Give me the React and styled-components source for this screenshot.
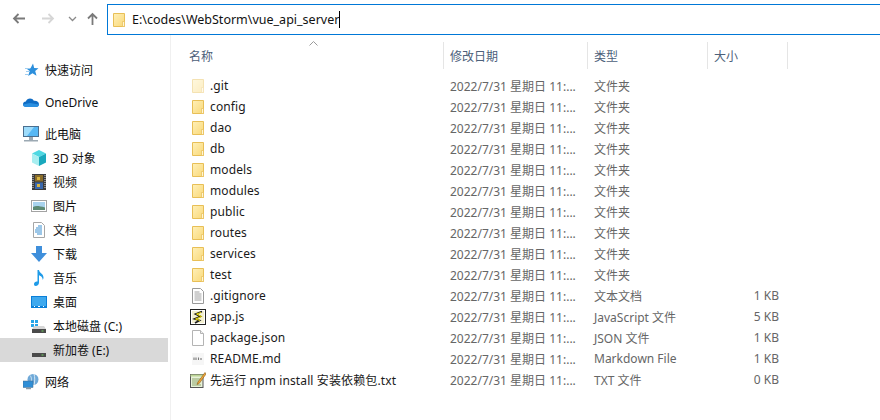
import React from "react";
import styled, { createGlobalStyle } from "styled-components";

const Global = createGlobalStyle`
  html, body { margin: 0; padding: 0; background: #fff; }
  body { font-family: "Noto Sans", "Noto Sans CJK SC", sans-serif; font-size: 12px; color: #1a1a1a; }
`;
const Win = styled.div`width: 880px; height: 420px; overflow: hidden; display: flex; flex-direction: column; background: #fff;`;
const Toolbar = styled.div`height: 35px; display: flex; align-items: flex-start; padding-top: 4px; box-sizing: border-box; flex: none;`;
const NavIcons = styled.div`width: 107px; height: 30px; display: flex; align-items: center; flex: none;`;
const NavBtn = styled.span`display: flex; width: ${p => p.$w}px; margin-left: ${p => p.$ml}px; justify-content: center;`;
const Address = styled.div`flex: 1; height: 31px; box-sizing: border-box; border: 1px solid #0078d7; border-right: 0; display: flex; align-items: center; padding-left: 3px; gap: 5px; font-size: 12.5px; color: #111;`;
const Caret = styled.span`display: inline-block; width: 1px; height: 17px; background: #000; vertical-align: -4px;`;
const Body = styled.div`flex: 1; display: flex; min-height: 0;`;
const Sidebar = styled.nav`width: 171px; flex: none; box-sizing: border-box; border-right: 1px solid #f0f0f0; padding-top: 23px; padding-right: 2px; display: flex; flex-direction: column;`;
const NavRow = styled.div`
  height: 24px; display: flex; align-items: center; gap: ${p => p.$sub ? 6 : 6}px; padding-left: ${p => p.$sub ? 31 : 23}px;
  margin-bottom: ${p => p.$gap || 0}px; background: ${p => p.$active ? "#d9d9d9" : "transparent"}; color: #111; white-space: nowrap;
`;
const IconBox = styled.span`width: 16px; height: 16px; display: flex; flex: none; align-items: center; justify-content: center;`;
const Main = styled.main`flex: 1; display: flex; flex-direction: column; position: relative;`;
const SortArrow = styled.svg`position: absolute; left: 138px; top: 6px;`;
const HeaderRow = styled.div`height: 27px; margin-top: 7px; display: grid; grid-template-columns: 273px 144px 120px 80px; flex: none;`;
const HeaderCell = styled.div`padding-left: ${p => p.$first ? 18 : 6}px; border-right: 1px solid #e5e5e5; display: flex; align-items: center; color: #4c607a;`;
const Rows = styled.div`margin-top: 6px; display: flex; flex-direction: column;`;
const Row = styled.div`height: 21px; display: grid; grid-template-columns: 273px 144px 120px 71px; align-items: center; white-space: nowrap;`;
const NameCell = styled.div`display: flex; align-items: center; gap: 4px; padding-left: 19px; color: #1a1a1a; letter-spacing: .12px;`;
const DataCell = styled.div`padding-left: 6px; color: #666; overflow: hidden;`;
const SizeCell = styled.div`text-align: right; color: #666;`;

const Folder = ({ faded }) => (
  <svg width="16" height="16" viewBox="0 0 16 16" opacity={faded ? 0.45 : 1}>
    <defs><linearGradient id="fg" x1="0" y1="0" x2="1" y2="1"><stop offset="0" stopColor="#fff0b8"/><stop offset="1" stopColor="#f9d878"/></linearGradient></defs>
    <path d="M2.5 1.5h11v13h-11z" fill="url(#fg)" stroke="#e8bf56"/>
    <path d="M11.5 9.5h2v5h-2z" fill="#fff6d4" stroke="#e8bf56" strokeWidth=".7"/>
  </svg>
);
const TextDoc = () => (
  <svg width="16" height="16" viewBox="0 0 16 16">
    <path d="M2.5.5h8l3 3v12h-11z" fill="#fff" stroke="#9a9a9a"/>
    <path d="M4.5 4h5M4.5 6h7M4.5 8h7M4.5 10h7M4.5 12h7" stroke="#a0a0a0"/>
  </svg>
);
const BlankDoc = () => (
  <svg width="16" height="16" viewBox="0 0 16 16">
    <path d="M2.5.5h8l3 3v12h-11z" fill="#fff" stroke="#b4b4b4"/>
    <path d="M10.5.5v3h3" fill="#f0f0f0" stroke="#b4b4b4"/>
  </svg>
);
const JsDoc = () => (
  <svg width="16" height="16" viewBox="0 0 16 16">
    <rect x=".5" y=".5" width="15" height="15" fill="#fff" stroke="#222"/>
    <rect x="2" y="2" width="12" height="12" fill="#f4f0d0"/>
    <path d="M12 2.500 5.500 5l5 2.500-6 2.500 5 1.500L5 14" fill="none" stroke="#1c1c1c" strokeWidth="1.600"/>
    <path d="M11 3.500 6.500 5l5 2.500-6 2.500 4.500 1.500" fill="none" stroke="#e8d800" strokeWidth="1"/>
  </svg>
);
const MdDoc = () => (
  <svg width="16" height="16" viewBox="0 0 16 16">
    <rect x="2" y="2" width="12" height="12" fill="#f6f6f6"/>
    <path d="M4 9V6.500M6 9V6.500M8.500 9V6.500M11 9V7" stroke="#777" strokeWidth="1.100"/>
  </svg>
);
const NoteDoc = () => (
  <svg width="16" height="16" viewBox="0 0 16 16">
    <rect x=".5" y="2.500" width="12.500" height="13" fill="#e8f2d8" stroke="#555"/>
    <path d="M.5 2.500h12.500v2H.5z" fill="#bcd596"/>
    <path d="M2 7h9M2 9h7M2 11h6M2 13h9" stroke="#8da56f"/>
    <path d="M15 .5 8 10l-1 2.500 2.400-1.200L16 2z" fill="#f2a63a" stroke="#8a5a12" strokeWidth=".6"/>
  </svg>
);
const Star = () => (
  <svg width="16" height="16" viewBox="0 0 16 16">
    <path d="M10 1.500 11.200 6l4.300.3L12.200 9l1.300 4.800L9.500 11.200 5.200 14 6.600 9 4 7l3.500-.8z" fill="#2c8fdc"/>
    <path d="M2 6.500h5M3 9.500h4M2 12.500h4" stroke="#9fcdf0"/>
  </svg>
);
const Cloud = () => (
  <svg width="16" height="16" viewBox="0 0 16 16">
    <path d="M3.500 13C1.500 13 0 11.800 0 10.200 0 8.700 1.200 7.600 2.800 7.500 3.500 5.500 5.200 4.500 7 4.500c1.700 0 3 .8 3.800 2.200 2.700-.4 5.200 1 5.200 3.500 0 1.600-1.300 2.800-3 2.800z" fill="#0f6cc4"/>
    <path d="M3.500 13c-2 0-3.500-.7-3.500-2.500L7 9l9 1.500c0 1.300-1.300 2.500-3 2.500z" fill="#2a8fe0"/>
  </svg>
);
const Monitor = ({ fill = "#58b8f4" }) => (
  <svg width="16" height="16" viewBox="0 0 16 16">
    <rect x=".5" y=".5" width="15" height="10" fill={fill} stroke="#4b6f8f"/>
    <path d="M1 1h10L4 10H1z" fill="#9edcfb"/>
    <path d="M6 11h4v3H6zM1 14h14v1.500H1z" fill="#9ca9b3"/>
  </svg>
);
const Cube = () => (
  <svg width="16" height="16" viewBox="0 0 16 16">
    <path d="M8 0 15 3.500 8 7 1 3.500z" fill="#4fd8e2"/>
    <path d="M1 3.500 8 7v9l-7-3.500z" fill="#a8eef0"/>
    <path d="M15 3.500 8 7v9l7-3.500z" fill="#1aa9bd"/>
  </svg>
);
const Film = () => (
  <svg width="16" height="16" viewBox="0 0 16 16">
    <rect x="1" y="0" width="14" height="16" fill="#3c3c3c"/>
    <path d="M2 1v14M14 1v14" stroke="#ddd" strokeWidth="1" strokeDasharray="1 1"/>
    <rect x="4" y="1" width="8" height="6.500" fill="#8a6d2a"/>
    <rect x="4" y="8.500" width="8" height="6.500" fill="#3a68ad"/>
    <path d="M6 3h3v3H6z" fill="#d9b540"/><path d="M6 10h3v3H6z" fill="#d9b540"/>
  </svg>
);
const Picture = () => (
  <svg width="16" height="16" viewBox="0 0 16 16">
    <rect x=".5" y="2.500" width="15" height="11" fill="#fff" stroke="#a3a3a3"/>
    <rect x="2" y="4" width="12" height="8" fill="#a9d3ee"/>
    <path d="M2 9c3-1.500 6-1 12 .5V12H2z" fill="#5d8a74"/>
  </svg>
);
const DocLines = () => (
  <svg width="16" height="16" viewBox="0 0 16 16">
    <path d="M2.500.5h8l3 3v12h-11z" fill="#fff" stroke="#a6a6a6"/>
    <path d="M7 4h4M5 6h6M4 8h7M4 10h7M6 12h5" stroke="#3a8fd1"/>
  </svg>
);
const Down = () => (
  <svg width="16" height="16" viewBox="0 0 16 16">
    <path d="M5 0h6v7h5l-8 9-8-9h5z" fill="#3f8fdb"/>
  </svg>
);
const Music = () => (
  <svg width="16" height="16" viewBox="0 0 16 16">
    <path d="M6.500 0h1.500c.3 3 4.500 3.500 4.500 7.500 0 1-.2 1.800-.8 2.500.2-3-2-4-3.700-4.800v7.300c0 2-1.600 3.500-3.300 3.500C3.400 16 3 15 3 14c0-1.800 2-3 3.500-2.500z" fill="#1f9be8"/>
  </svg>
);
const Desktop = () => (
  <svg width="16" height="16" viewBox="0 0 16 16">
    <rect x="0" y="2" width="16" height="12" fill="#0a7fd8"/>
    <rect x="1" y="3" width="14" height="9" fill="#3fa9ee"/>
    <path d="M3 12.500h1M7 12.500h2M12 12.500h1" stroke="#fff"/>
  </svg>
);
const Drive = ({ win }) => (
  <svg width="16" height="16" viewBox="0 0 16 16">
    {win && <path d="M0 2h3v3H0zM4 2h3v3H4zM0 6h3v3H0zM4 6h3v3H4z" fill="#27a5e8"/>}
    <path d="M3 8h10l2 3H1z" fill="#d6d6d6"/>
    <rect x="1" y="11" width="14" height="4" fill="#4a4a4a"/>
    <rect x="10.500" y="12.500" width="2" height="1" fill="#70d060"/>
  </svg>
);
const Net = () => (
  <svg width="16" height="16" viewBox="0 0 16 16">
    <circle cx="10" cy="5.500" r="5.500" fill="#6fa9d8"/>
    <path d="M7 1.500c2 2 2 6 0 8M11 0c1 3 1 7 0 11" stroke="#d5e8f5" fill="none"/>
    <rect x="0" y="7" width="10" height="6.500" fill="#2f8ed6" stroke="#44698a" strokeWidth=".5"/>
    <path d="M3 14.500h5" stroke="#8c9aa5" strokeWidth="1.500"/>
  </svg>
);
const Arrow = ({ dir, color }) => {
  const d = { left: "M14 7.500H3M7.500 3 3 7.500 7.500 12", right: "M1 7.500h11M7.500 3 12 7.500 7.500 12", up: "M7.500 14V3M3 7.500 7.500 3 12 7.500" }[dir];
  return <svg width="15" height="16" viewBox="0 0 15 16"><path d={d} fill="none" stroke={color} strokeWidth="1.800"/></svg>;
};

const navItems = [
  { icon: <Star />, label: "快速访问", gap: 8 },
  { icon: <Cloud />, label: "OneDrive", gap: 8 },
  { icon: <Monitor />, label: "此电脑" },
  { icon: <Cube />, label: "3D 对象", sub: true },
  { icon: <Film />, label: "视频", sub: true },
  { icon: <Picture />, label: "图片", sub: true },
  { icon: <DocLines />, label: "文档", sub: true },
  { icon: <Down />, label: "下载", sub: true },
  { icon: <Music />, label: "音乐", sub: true },
  { icon: <Desktop />, label: "桌面", sub: true },
  { icon: <Drive win />, label: "本地磁盘 (C:)", sub: true },
  { icon: <Drive />, label: "新加卷 (E:)", sub: true, active: true, gap: 8 },
  { icon: <Net />, label: "网络" },
];
const folders = [".git", "config", "dao", "db", "models", "modules", "public", "routes", "services", "test"];
const files = [
  { icon: <TextDoc />, name: ".gitignore", type: "文本文档", size: "1 KB" },
  { icon: <JsDoc />, name: "app.js", type: "JavaScript 文件", size: "5 KB" },
  { icon: <BlankDoc />, name: "package.json", type: "JSON 文件", size: "1 KB" },
  { icon: <MdDoc />, name: "README.md", type: "Markdown File", size: "1 KB" },
  { icon: <NoteDoc />, name: "先运行 npm install 安装依赖包.txt", type: "TXT 文件", size: "0 KB" },
];
const rows = [
  ...folders.map((name, i) => ({ icon: <Folder faded={i === 0} />, name, type: "文件夹", size: "" })),
  ...files,
];
const DATE = "2022/7/31 星期日 11:...";

export default function App() {
  return (
    <Win>
      <Global />
      <Toolbar>
        <NavIcons>
          <NavBtn $w={15} $ml={11}><Arrow dir="left" color="#7a7a7a" /></NavBtn>
          <NavBtn $w={15} $ml={15}><Arrow dir="right" color="#d6d6d6" /></NavBtn>
          <NavBtn $w={9} $ml={12}>
            <svg width="9" height="6" viewBox="0 0 9 6"><path d="M1 1l3.500 3.500L8 1" fill="none" stroke="#8a8a8a" strokeWidth="1.300"/></svg>
          </NavBtn>
          <NavBtn $w={15} $ml={8}><Arrow dir="up" color="#7a7a7a" /></NavBtn>
        </NavIcons>
        <Address>
          <IconBox><Folder /></IconBox>
          <span>E:\codes\WebStorm\vue_api_server<Caret /></span>
        </Address>
      </Toolbar>
      <Body>
        <Sidebar>
          {navItems.map(n => (
            <NavRow key={n.label} $sub={n.sub} $active={n.active} $gap={n.gap}>
              <IconBox>{n.icon}</IconBox>
              <span>{n.label}</span>
            </NavRow>
          ))}
        </Sidebar>
        <Main>
          <SortArrow width="9" height="5" viewBox="0 0 9 5"><path d="M.5 4.500 4.500.5l4 4" fill="none" stroke="#9a9a9a"/></SortArrow>
          <HeaderRow>
            <HeaderCell $first>名称</HeaderCell>
            <HeaderCell>修改日期</HeaderCell>
            <HeaderCell>类型</HeaderCell>
            <HeaderCell>大小</HeaderCell>
          </HeaderRow>
          <Rows>
            {rows.map(r => (
              <Row key={r.name}>
                <NameCell><IconBox>{r.icon}</IconBox><span>{r.name}</span></NameCell>
                <DataCell>{DATE}</DataCell>
                <DataCell>{r.type}</DataCell>
                <SizeCell>{r.size}</SizeCell>
              </Row>
            ))}
          </Rows>
        </Main>
      </Body>
    </Win>
  );
}
